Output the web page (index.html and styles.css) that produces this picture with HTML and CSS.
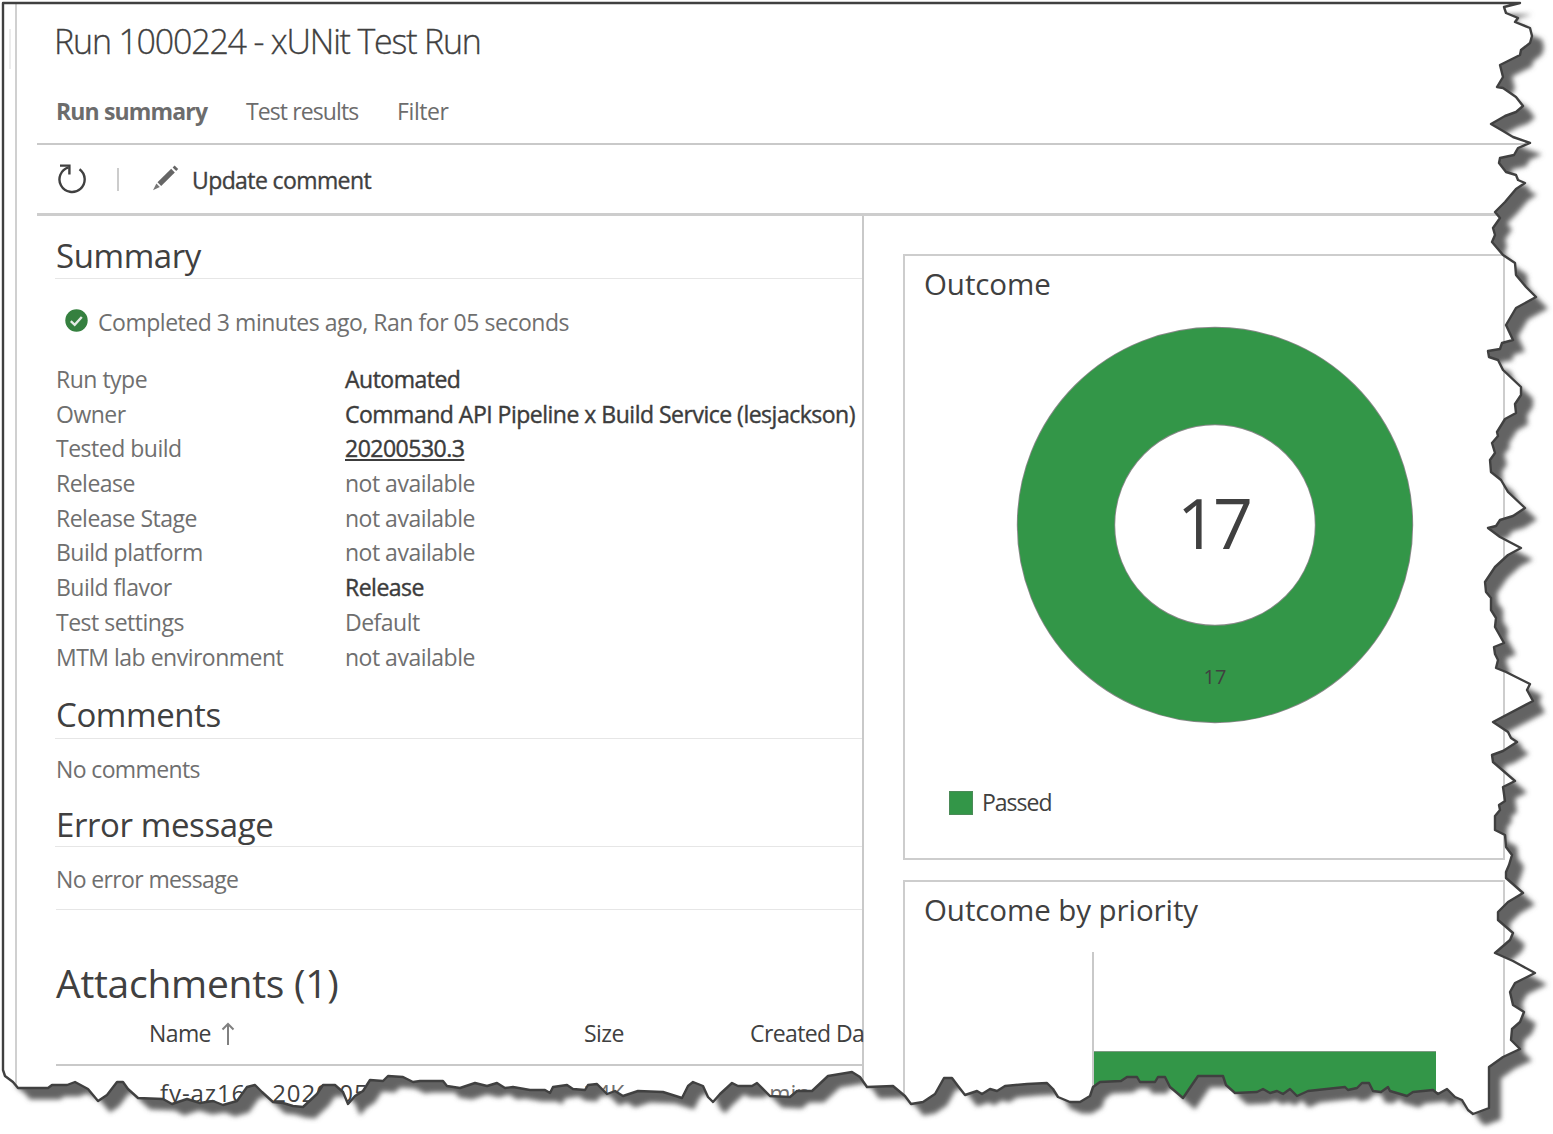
FILE: index.html
```html
<!DOCTYPE html>
<html lang="en">
<head>
<meta charset="utf-8">
<title>Run 1000224 - xUNit Test Run</title>
<link rel="stylesheet" href="styles.css">
</head>
<body>
<div class="page">
  <aside class="rail"><div class="rail-handle"></div></aside>
  <main class="main">
    <h1 class="title">Run 1000224 - xUNit Test Run</h1>
    <nav class="tabs">
      <a class="tab tab-active">Run summary</a>
      <a class="tab tab-results">Test results</a>
      <a class="tab tab-filter">Filter</a>
    </nav>
    <div class="toolbar">
      <svg class="icon-refresh" width="32" height="32" viewBox="0 0 32 32" fill="none" stroke="#404040" stroke-width="2.4">
        <path d="M23.5 7.2A12.6 12.6 0 1 1 12.5 5.3"/>
        <path d="M4 3.6H13.4V12.4"/>
      </svg>
      <span class="separator"></span>
      <svg class="icon-pencil" width="28" height="28" viewBox="0 0 28 28" fill="#666">
        <path d="M5.5 18.2L19.2 4.8L22.8 8.4L9.2 22Z"/>
        <path d="M20.6 3.5L22.6 1.6L26.2 5L24.2 7Z"/>
        <path d="M4.4 19.6L7.8 23L1 26.2Z" fill="#777"/>
      </svg>
      <span class="update">Update comment</span>
    </div>
    <div class="body">
      <section class="left">
        <h2 class="heading heading-summary">Summary</h2>
        <div class="status">
          <svg width="23" height="23" viewBox="0 0 23 23">
            <circle cx="11.5" cy="11.5" r="11.2" fill="#35803f"/>
            <path d="M5.8 12.2L9.7 15.8L16.8 8" fill="none" stroke="#e4ebe5" stroke-width="2.4"/>
          </svg>
          <span>Completed 3 minutes ago, Ran for 05 seconds</span>
        </div>
        <dl class="details">
          <dt>Run type</dt><dd class="strong">Automated</dd>
          <dt>Owner</dt><dd class="strong">Command API Pipeline x Build Service (lesjackson)</dd>
          <dt>Tested build</dt><dd class="strong"><a class="build-link">20200530.3</a></dd>
          <dt>Release</dt><dd>not available</dd>
          <dt>Release Stage</dt><dd>not available</dd>
          <dt>Build platform</dt><dd>not available</dd>
          <dt>Build flavor</dt><dd class="strong">Release</dd>
          <dt>Test settings</dt><dd>Default</dd>
          <dt>MTM lab environment</dt><dd>not available</dd>
        </dl>
        <h2 class="heading heading-comments">Comments</h2>
        <p class="note">No comments</p>
        <h2 class="heading heading-error">Error message</h2>
        <p class="note note-last">No error message</p>
        <h2 class="attachments">Attachments (1)</h2>
        <div class="files files-head">
          <span class="file-name">Name
            <svg width="14" height="24" viewBox="0 0 14 24" fill="none" stroke="#808080" stroke-width="2"><path d="M7 23V2M1.5 7.5L7 2L12.5 7.5"/></svg>
          </span>
          <span>Size</span>
          <span class="file-date">Created Da</span>
        </div>
        <div class="files files-row">
          <span class="file-link">fy-az168_2020-05</span>
          <span>34K</span>
          <span>3 min</span>
        </div>
      </section>
      <section class="right">
        <article class="card">
          <h3 class="card-title">Outcome</h3>
          <svg class="donut" width="398" height="398" viewBox="0 0 398 398">
            <circle cx="199" cy="199" r="149" fill="none" stroke="#888" stroke-width="98.4"/>
            <circle cx="199" cy="199" r="149" fill="none" stroke="#339648" stroke-width="96.6"/>
            <text class="donut-total" x="197" y="222.5">17</text>
            <text class="donut-label" x="199" y="358">17</text>
          </svg>
          <div class="legend"><span class="swatch"></span>Passed</div>
        </article>
        <article class="card card-priority">
          <h3 class="card-title">Outcome by priority</h3>
          <div class="plot"><div class="bar"></div></div>
        </article>
      </section>
    </div>
  </main>
</div>
<svg class="torn" width="1553" height="1134" viewBox="0 0 1553 1134">
  <defs>
    <path id="sheet" d="M3 3H1520L1504 7L1506 13L1518 18L1515 22L1530 28L1532 36L1530 43L1521 50L1520 55L1500 65L1503 77L1497 87L1503 88L1516 97L1523 106L1516 112L1505 116L1491 124L1503 131L1513 137L1530 143L1518 148L1514 155L1500 158L1499 163L1506 172L1516 175L1518 180L1525 183L1516 189L1505 202L1495 212L1500 218L1493 228L1495 235L1492 242L1503 255L1515 263L1516 275L1526 287L1536 297L1516 308L1506 325L1513 340L1502 343L1500 349L1488 351L1489 357L1498 360L1503 370L1521 387L1521 395L1515 404L1516 413L1505 419L1497 432L1498 436L1492 443L1495 453L1490 460L1491 472L1501 480L1508 492L1525 508L1513 516L1500 520L1496 526L1488 528L1500 537L1521 548L1508 555L1495 567L1485 582L1486 592L1491 598L1491 610L1496 618L1495 627L1504 643L1494 647L1495 654L1498 660L1496 668L1506 672L1530 684L1527 690L1533 701L1493 722L1508 732L1511 738L1517 742L1503 751L1492 755L1493 762L1515 781L1503 787L1505 801L1499 805L1500 810L1495 816L1495 830L1505 835L1506 847L1512 855L1509 865L1506 872L1506 878L1523 893L1508 902L1498 912L1498 920L1513 933L1510 940L1495 953L1513 961L1535 973L1515 983L1510 992L1513 1005L1524 1012L1520 1022L1512 1029L1511 1040L1520 1049L1503 1057L1489 1067V1108L1473 1114L1468 1110L1462 1100L1455 1097L1447 1089L1438 1094L1433 1090L1413 1092L1407 1096L1390 1091L1388 1087L1381 1092L1373 1091L1369 1083H1362L1357 1088L1348 1090L1345 1087L1308 1091L1297 1096L1290 1089L1283 1094L1277 1091L1270 1093L1263 1089L1257 1092L1235 1093L1226 1085L1223 1076H1198L1183 1098L1170 1087L1165 1077H1158L1155 1082H1140L1137 1077H1127L1121 1081L1100 1082L1093 1087L1090 1096L1080 1102H1070L1058 1097L1053 1089L1047 1083L1027 1084L1005 1086L997 1091L990 1089L982 1094L977 1091L965 1095L958 1086L952 1078H944L935 1094L923 1102L911 1104L905 1096L893 1086L867 1087L860 1077L852 1072L828 1076L812 1091H797L790 1097L770 1096L757 1083L752 1086H738L732 1083L720 1094L713 1102L708 1097L703 1086L693 1082L688 1086L682 1098L663 1092L638 1091L623 1096L615 1091L607 1094L597 1084L588 1085L585 1090L573 1089L567 1085L553 1087L550 1093L545 1090H530L513 1087L505 1088L497 1083L487 1086L475 1083L460 1088L447 1086L443 1081H420L413 1082L403 1077L388 1076L383 1081L370 1080L363 1091L355 1096L348 1104L343 1092L335 1085H323L317 1094L303 1107L293 1106L283 1103L273 1102L262 1092L255 1085L247 1087L237 1101L223 1105L213 1101L200 1103L187 1099L172 1104L163 1099L138 1098L128 1089L123 1082H117L107 1095L98 1101L88 1089L75 1082L67 1085H52L48 1088H18L13 1082L5 1076L3 1070Z"/>
    <clipPath id="margin"><path clip-rule="evenodd" d="M0 0H1553V1134H0ZM3 3H1520L1504 7L1506 13L1518 18L1515 22L1530 28L1532 36L1530 43L1521 50L1520 55L1500 65L1503 77L1497 87L1503 88L1516 97L1523 106L1516 112L1505 116L1491 124L1503 131L1513 137L1530 143L1518 148L1514 155L1500 158L1499 163L1506 172L1516 175L1518 180L1525 183L1516 189L1505 202L1495 212L1500 218L1493 228L1495 235L1492 242L1503 255L1515 263L1516 275L1526 287L1536 297L1516 308L1506 325L1513 340L1502 343L1500 349L1488 351L1489 357L1498 360L1503 370L1521 387L1521 395L1515 404L1516 413L1505 419L1497 432L1498 436L1492 443L1495 453L1490 460L1491 472L1501 480L1508 492L1525 508L1513 516L1500 520L1496 526L1488 528L1500 537L1521 548L1508 555L1495 567L1485 582L1486 592L1491 598L1491 610L1496 618L1495 627L1504 643L1494 647L1495 654L1498 660L1496 668L1506 672L1530 684L1527 690L1533 701L1493 722L1508 732L1511 738L1517 742L1503 751L1492 755L1493 762L1515 781L1503 787L1505 801L1499 805L1500 810L1495 816L1495 830L1505 835L1506 847L1512 855L1509 865L1506 872L1506 878L1523 893L1508 902L1498 912L1498 920L1513 933L1510 940L1495 953L1513 961L1535 973L1515 983L1510 992L1513 1005L1524 1012L1520 1022L1512 1029L1511 1040L1520 1049L1503 1057L1489 1067V1108L1473 1114L1468 1110L1462 1100L1455 1097L1447 1089L1438 1094L1433 1090L1413 1092L1407 1096L1390 1091L1388 1087L1381 1092L1373 1091L1369 1083H1362L1357 1088L1348 1090L1345 1087L1308 1091L1297 1096L1290 1089L1283 1094L1277 1091L1270 1093L1263 1089L1257 1092L1235 1093L1226 1085L1223 1076H1198L1183 1098L1170 1087L1165 1077H1158L1155 1082H1140L1137 1077H1127L1121 1081L1100 1082L1093 1087L1090 1096L1080 1102H1070L1058 1097L1053 1089L1047 1083L1027 1084L1005 1086L997 1091L990 1089L982 1094L977 1091L965 1095L958 1086L952 1078H944L935 1094L923 1102L911 1104L905 1096L893 1086L867 1087L860 1077L852 1072L828 1076L812 1091H797L790 1097L770 1096L757 1083L752 1086H738L732 1083L720 1094L713 1102L708 1097L703 1086L693 1082L688 1086L682 1098L663 1092L638 1091L623 1096L615 1091L607 1094L597 1084L588 1085L585 1090L573 1089L567 1085L553 1087L550 1093L545 1090H530L513 1087L505 1088L497 1083L487 1086L475 1083L460 1088L447 1086L443 1081H420L413 1082L403 1077L388 1076L383 1081L370 1080L363 1091L355 1096L348 1104L343 1092L335 1085H323L317 1094L303 1107L293 1106L283 1103L273 1102L262 1092L255 1085L247 1087L237 1101L223 1105L213 1101L200 1103L187 1099L172 1104L163 1099L138 1098L128 1089L123 1082H117L107 1095L98 1101L88 1089L75 1082L67 1085H52L48 1088H18L13 1082L5 1076L3 1070Z"/></clipPath>
    <filter id="soft" x="-5%" y="-5%" width="110%" height="110%"><feGaussianBlur stdDeviation="2.9"/></filter>
  </defs>
  <g clip-path="url(#margin)">
    <rect width="1553" height="1134" fill="#fff"/>
    <g filter="url(#soft)"><use href="#sheet" x="12" y="11.5" fill="#636363"/></g>
  </g>
  <use href="#sheet" fill="none" stroke="#404040" stroke-width="2.4" stroke-linejoin="round"/>
</svg>
</body>
</html>
```

FILE: styles.css
```css
* { box-sizing: border-box; margin: 0; padding: 0; }

body {
  width: 1553px;
  height: 1134px;
  overflow: hidden;
  background: #fff;
  color: #404040;
  font: 23px/35px "Open Sans", "Noto Sans", sans-serif;
}

.page { display: flex; height: 1134px; overflow: hidden; }

.rail {
  flex: none;
  width: 17px;
  padding: 29px 0 0 9px;
  border-right: 2px solid #d0d0d0;
}
.rail-handle { width: 2px; height: 40px; background: #ececec; }

.main {
  flex: 1;
  display: flex;
  flex-direction: column;
  margin-left: 20px;
}

.title {
  flex: none;
  height: 82px;
  padding-left: 17px;
  font-size: 34px;
  font-weight: 300;
  line-height: 83px;
  letter-spacing: -1.2px;
  -webkit-text-stroke: 0.3px #404040;
}

.tabs {
  flex: none;
  display: flex;
  height: 63px;
  padding-left: 19px;
  border-bottom: 2px solid #c9c9c9;
  line-height: 58px;
  color: #6c6c6c;
}
.tab-active { width: 190px; font-weight: 700; letter-spacing: -0.85px; }
.tab-results { width: 151px; letter-spacing: -0.9px; }
.tab-filter { letter-spacing: -0.4px; }

.toolbar {
  flex: none;
  display: flex;
  align-items: center;
  height: 71px;
  padding-left: 19px;
  border-bottom: 3px solid #cdcdcd;
}
.icon-refresh, .icon-pencil { margin-top: -2px; }
.separator { width: 2px; height: 23px; margin: 0 33px 0 29px; background: #ccc; }
.update {
  margin: 3px 0 0 12px;
  letter-spacing: -0.6px;
  -webkit-text-stroke: 0.35px #404040;
}

.body { flex: 1 0 auto; display: flex; }

.left {
  flex: none;
  width: 827px;
  padding-left: 19px;
  border-right: 2px solid #c9c9c9;
}

.heading {
  border-bottom: 1px solid #e6e6e6;
  font-size: 33px;
  font-weight: 400;
  margin-left: -1px;
  padding-left: 1px;
  letter-spacing: -0.4px;
}
.heading-summary { height: 63px; line-height: 79px; }
.heading-comments { height: 66px; line-height: 84px; margin-top: -1px; }
.heading-error { height: 47px; line-height: 50px; }

.status {
  display: flex;
  align-items: center;
  height: 83px;
  padding: 3px 0 0 9px;
  gap: 10px;
  color: #6f6f6f;
  letter-spacing: -0.47px;
}
.status svg { margin-top: -3px; }

.details {
  display: grid;
  grid-template-columns: 289px 1fr;
  grid-auto-rows: 34.7px;
  line-height: 34.7px;
  color: #6f6f6f;
  letter-spacing: -0.5px;
  white-space: nowrap;
}
.strong {
  color: #3c3c3c;
  -webkit-text-stroke: 0.4px #3c3c3c;
}
.build-link {
  text-decoration: underline;
  text-decoration-thickness: 2px;
  text-underline-offset: 2px;
}

.note {
  height: 61px;
  line-height: 61px;
  color: #6f6f6f;
  letter-spacing: -0.63px;
}
.note-last {
  height: 63px;
  line-height: 65px;
  border-bottom: 1px solid #e6e6e6;
}

.attachments {
  height: 101px;
  font-size: 39px;
  font-weight: 400;
  line-height: 145px;
  letter-spacing: -0.28px;
}

.files {
  display: grid;
  grid-template-columns: 435px 166px 1fr;
  padding-left: 93px;
  white-space: nowrap;
}
.files-head {
  height: 55px;
  border-bottom: 2px solid #c9c9c9;
  line-height: 45px;
  letter-spacing: -0.6px;
}
.file-name svg { margin-left: 5px; vertical-align: -4px; }
.files-row { color: #6f6f6f; line-height: 54px; }
.file-link { padding-left: 11px; color: #404040; font-size: 24px; letter-spacing: 0.9px; }

.right {
  flex: 1;
  display: flex;
  flex-direction: column;
  gap: 20px;
  padding: 38px 0 0 39px;
}
.card {
  width: 602px;
  height: 606px;
  border: 2px solid #cdcdcd;
}
.card-title {
  padding-left: 19px;
  height: 70px;
  font-size: 29.5px;
  font-weight: 400;
  line-height: 56px;
  letter-spacing: -0.08px;
}
.donut { display: block; margin-left: 111px; }
.donut-total { font-size: 70px; letter-spacing: -4px; text-anchor: middle; fill: #404040; }
.donut-label { font-size: 20px; text-anchor: middle; fill: #404040; }

.legend {
  display: flex;
  align-items: center;
  gap: 9px;
  margin: 61px 0 0 44px;
  letter-spacing: -1px;
}
.swatch { width: 24px; height: 24px; background: #339648; border: 1px solid #4b8a58; }

.plot {
  display: flex;
  height: 250px;
  margin-left: 187px;
  padding-top: 99px;
  border-left: 2px solid #c9c9c9;
}
.bar { width: 342px; background: #339648; border-top: 1px solid #7c9a82; }

/* torn paper edge drawn over the page */
.torn { position: absolute; left: 0; top: 0; }
```
